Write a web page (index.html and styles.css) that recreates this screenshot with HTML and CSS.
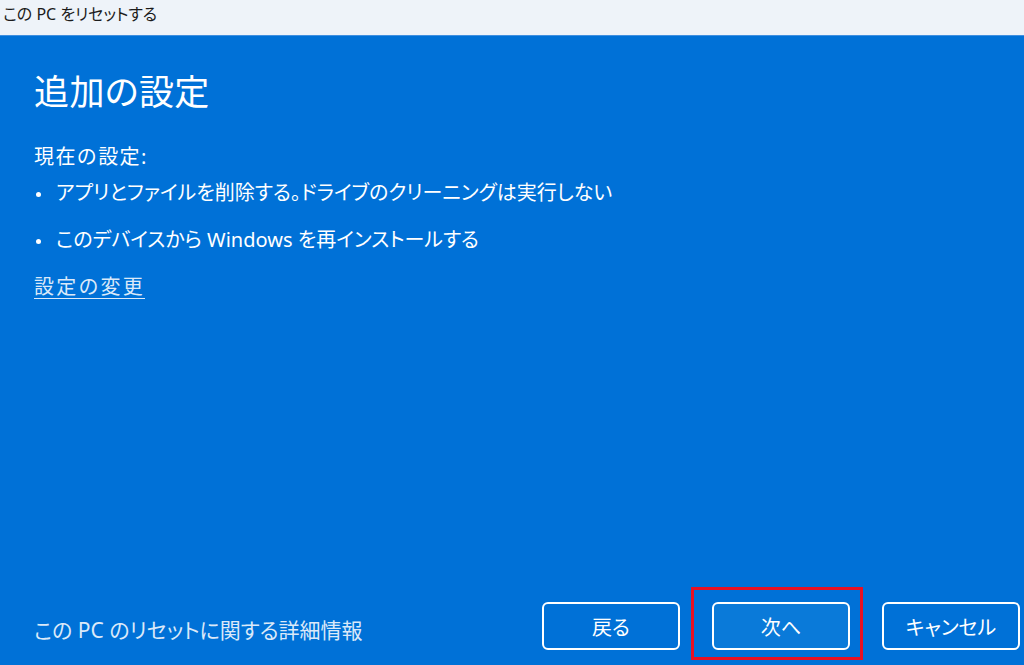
FILE: index.html
```html
<!DOCTYPE html>
<html lang="ja">
<head>
<meta charset="utf-8">
<title>この PC をリセットする</title>
<link rel="stylesheet" href="styles.css">
</head>
<body>
<div class="titlebar">この PC をリセットする</div>
<main class="panel">
  <section class="content">
    <h1 class="heading">追加の設定</h1>
    <p class="label">現在の設定:</p>
    <ul class="list">
      <li>アプリとファイルを削除する。ドライブのクリーニングは実行しない</li>
      <li>このデバイスから Windows を再インストールする</li>
    </ul>
    <a class="link" href="#">設定の変更</a>
  </section>
  <footer class="footer">
    <span class="info">この PC のリセットに関する詳細情報</span>
    <div class="buttons">
      <button class="btn">戻る</button>
      <button class="btn btn-primary">次へ<span class="highlight"></span></button>
      <button class="btn">キャンセル</button>
    </div>
  </footer>
</main>
</body>
</html>
```
FILE: styles.css
```css
* { box-sizing: border-box; }
html, body { margin: 0; padding: 0; }
body {
  width: 1024px;
  height: 665px;
  overflow: hidden;
  font-family: "Noto Sans", "Noto Sans CJK JP", sans-serif;
  font-feature-settings: "palt";
  background: #0071d7;
}
.titlebar {
  height: 36px;
  background: #eef3f9;
  color: #1b1b1b;
  font-size: 16px;
  line-height: 28px;
  padding-left: 3px;
  border-bottom: 1px solid #3f8fe0;
}
.panel {
  height: 629px;
  display: flex;
  flex-direction: column;
  justify-content: space-between;
  padding: 0 4px 15px 34px;
  color: #ffffff;
}
.content { padding-top: 34px; }
.heading {
  margin: 0;
  font-size: 35px;
  font-weight: 400;
  line-height: 44px;
  letter-spacing: 0.4px;
}
.label {
  margin: 29px 0 0;
  font-size: 20px;
  line-height: 28px;
  font-feature-settings: normal;
  letter-spacing: 1.4px;
}
.list {
  margin: 8px 0 0;
  padding: 0;
  list-style: none;
}
.list li {
  font-size: 20px;
  line-height: 28px;
  margin-bottom: 19px;
  padding-left: 22px;
  position: relative;
}
.list li::before {
  content: "";
  position: absolute;
  left: 2px;
  top: 13px;
  width: 5px;
  height: 5px;
  border-radius: 50%;
  background: #ffffff;
}
.link {
  display: inline-block;
  font-size: 20px;
  line-height: 28px;
  color: #dbe9f9;
  font-feature-settings: normal;
  letter-spacing: 2.2px;
  text-decoration: underline;
  text-underline-offset: 4px;
  text-decoration-thickness: 1px;
}
.footer {
  display: flex;
  justify-content: space-between;
  align-items: center;
}
.info {
  font-size: 21px;
  line-height: 28px;
  color: #dbe9f9;
  padding-top: 8px;
}
.buttons {
  display: flex;
  gap: 32px;
}
.btn {
  position: relative;
  width: 138px;
  height: 48px;
  border: 2px solid #ffffff;
  border-radius: 6px;
  background: transparent;
  color: #ffffff;
  font-family: inherit;
  font-feature-settings: "palt";
  font-size: 20px;
  padding: 0;
}
.btn-primary { background: #0a7ad9; }
.highlight {
  position: absolute;
  left: -23px;
  top: -17px;
  right: -15px;
  bottom: -12px;
  border: 3px solid #e81123;
  pointer-events: none;
}
```
